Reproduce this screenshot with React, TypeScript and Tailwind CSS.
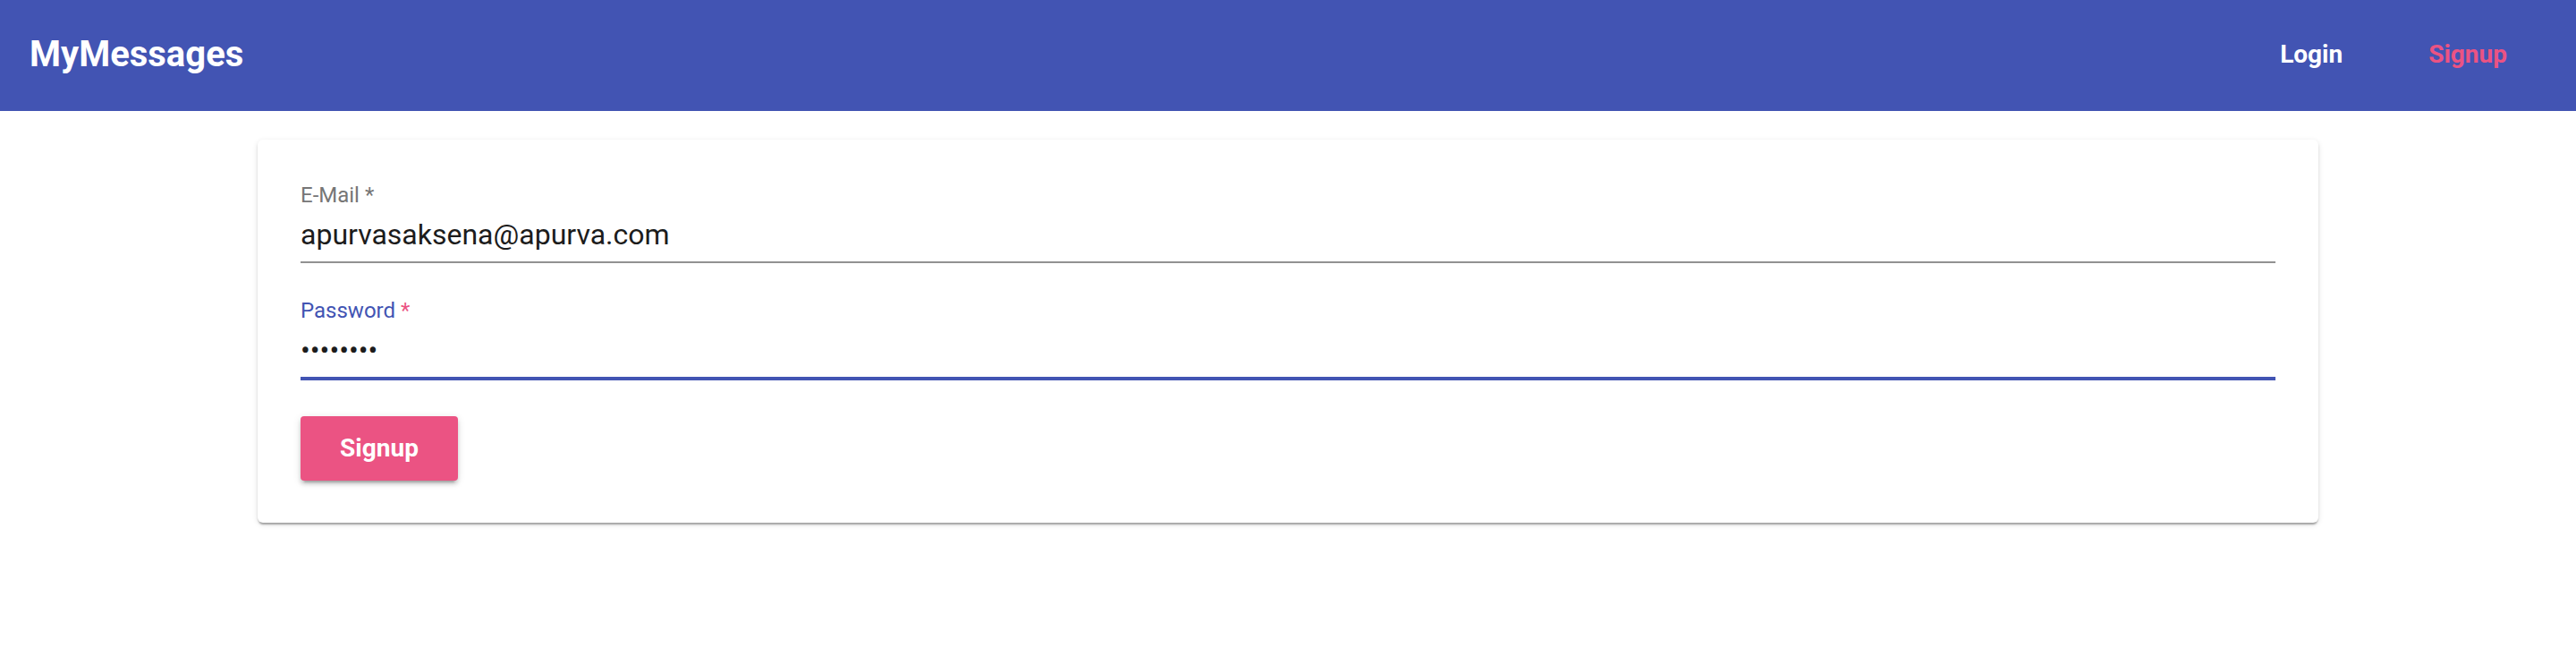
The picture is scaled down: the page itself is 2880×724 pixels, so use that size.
import React from "react";

const FONT = "font-['Roboto','Liberation_Sans',sans-serif]";

function Header() {
  return (
    <header className="flex h-[124px] items-center justify-between bg-[#4254b3] pb-[3px] pl-[33px] pr-[77px]">
      <h1 className="text-[40px] font-bold leading-[40px] text-white">MyMessages</h1>
      <nav className="flex items-center gap-[96px] text-[28px] font-bold leading-[28px]">
        <a className="text-white">Login</a>
        <a className="text-[#eb5383]">Signup</a>
      </nav>
    </header>
  );
}

interface FieldProps {
  label: string;
  value: string;
  focused?: boolean;
}

function Field({ label, value, focused }: FieldProps) {
  return (
    <div>
      <label
        className={
          "block text-[24px] leading-[32px] " +
          (focused ? "text-[#4254b3]" : "text-[#767676]")
        }
      >
        {label} <span className={focused ? "text-[#eb5383]" : ""}>*</span>
      </label>
      <div className="mt-[8px] text-[32px] leading-[40px] text-[#1c1c1c]">{value}</div>
      <div
        className={
          "mt-[10px] " + (focused ? "h-[4px] bg-[#4254b3]" : "h-[2px] bg-[#919191]")
        }
      />
    </div>
  );
}

export default function App() {
  return (
    <div className={`${FONT} min-h-[724px] bg-white`}>
      <Header />
      <main className="mx-auto mt-[32px] w-[80%] rounded-[6px] bg-white px-[48px] pb-[47px] pt-[46px] shadow-[0_4px_2px_-2px_rgba(0,0,0,0.2),0_2px_2px_0_rgba(0,0,0,0.14),0_2px_6px_0_rgba(0,0,0,0.12)]">
        <Field label="E-Mail" value="apurvasaksena@apurva.com" />
        <div className="mt-[37px]">
          <Field label="Password" value="••••••••" focused />
        </div>
        <button className="mt-[40px] flex h-[72px] w-[176px] items-center justify-center rounded-[4px] bg-[#eb5383] text-[28px] font-bold text-white shadow-[0_6px_2px_-4px_rgba(0,0,0,0.2),0_4px_4px_0_rgba(0,0,0,0.14),0_2px_10px_0_rgba(0,0,0,0.12)]">
          Signup
        </button>
      </main>
    </div>
  );
}
